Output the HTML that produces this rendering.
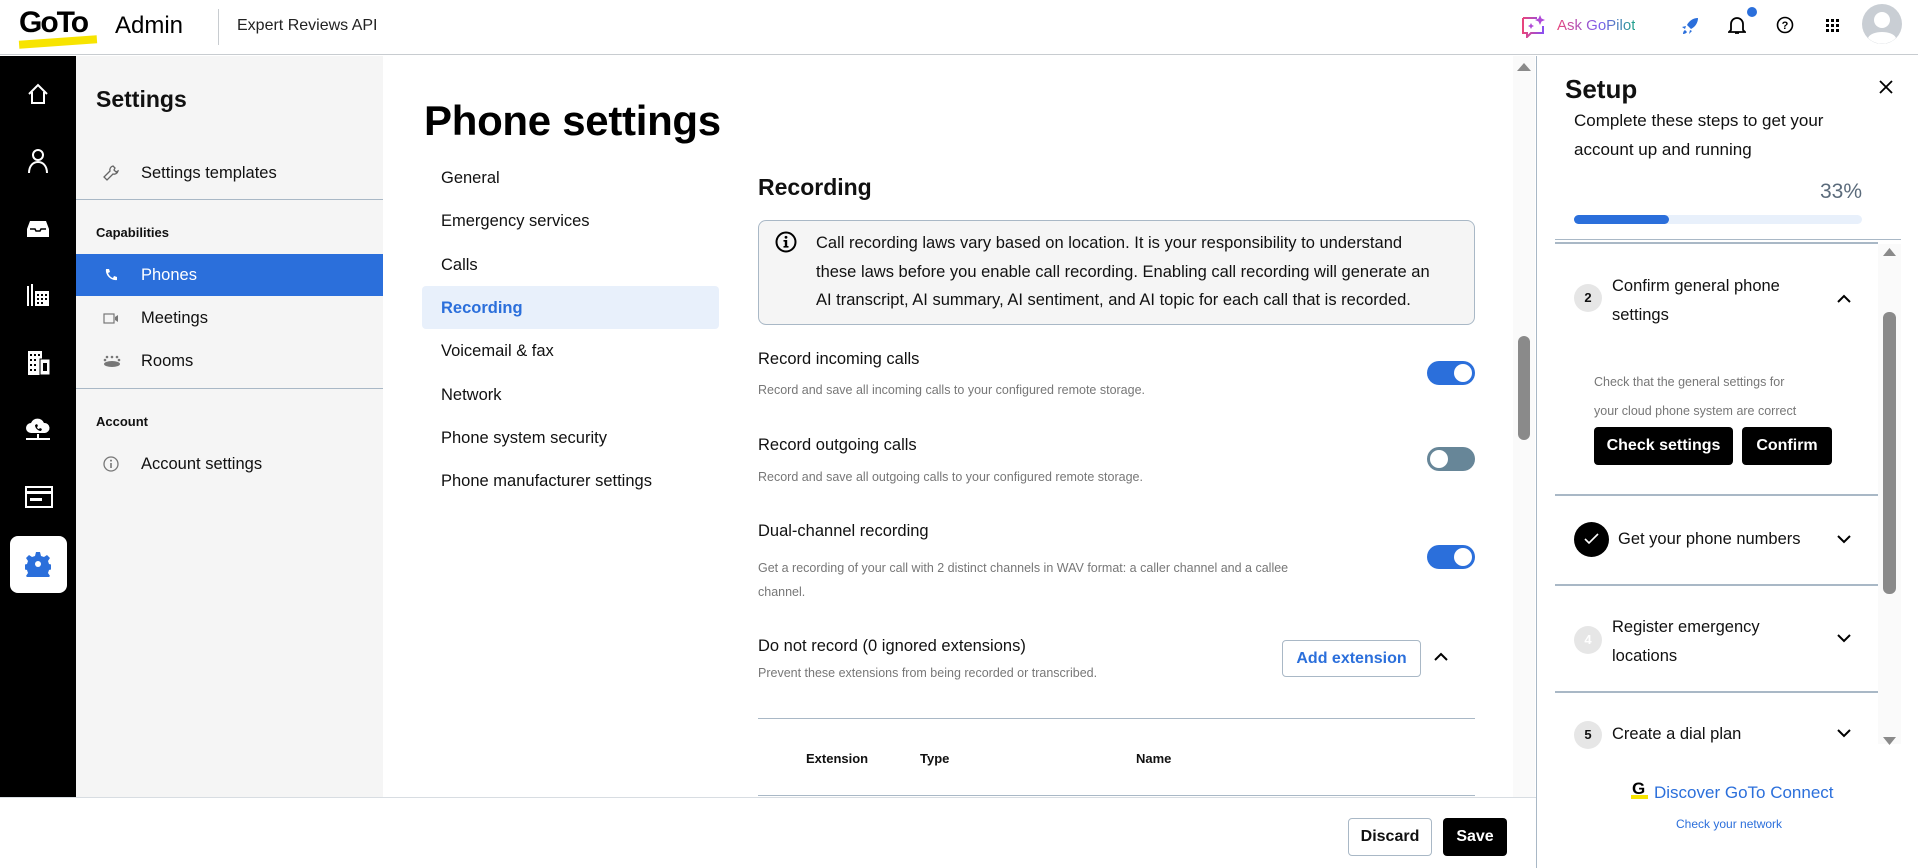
<!DOCTYPE html>
<html><head><meta charset="utf-8"><style>
*{box-sizing:border-box;margin:0;padding:0}
body{width:1918px;height:868px;overflow:hidden;font-family:"Liberation Sans",Arial,sans-serif;color:#111;background:#fff;position:relative}
.a{position:absolute;white-space:nowrap}
.hdr{left:0;top:0;width:1918px;height:55px;border-bottom:1px solid #c8ccd0;background:#fff}
.rail{left:0;top:56px;width:76px;height:742px;background:#000}
.side{left:76px;top:56px;width:307px;height:742px;background:#f5f5f5}
.t17{font-size:16.5px}
.sub{font-size:12.5px;color:#777}
.tog{width:48px;height:24px;border-radius:12px;background:#2b6fdb}
.tog::after{content:"";position:absolute;top:3px;left:27px;width:18px;height:18px;border-radius:50%;background:#fff}
.tog.off{background:#678698}
.tog.off::after{left:3px}
.hr{height:1px;background:#a9b8c6}
.btnb{background:#000;color:#fff;font-weight:bold;font-size:16px;border-radius:4px;text-align:center}
.circ{width:28px;height:28px;border-radius:50%;background:#e6e6e6;font-size:13px;font-weight:bold;text-align:center;line-height:28px}
</style></head><body>
<div class="a hdr"></div>
<div class="a" style="left:19px;top:6px;font-size:30px;font-weight:bold;letter-spacing:-2px;color:#000">GoTo</div>
<div class="a" style="left:19px;top:38px;width:78px;height:8px;background:#f7e400;transform:rotate(-4deg)"></div>
<div class="a" style="left:115px;top:12px;font-size:24px;color:#000">Admin</div>
<div class="a" style="left:218px;top:9px;width:1px;height:36px;background:#c8ccd0"></div>
<div class="a" style="left:237px;top:17px;font-size:16px;color:#222">Expert Reviews API</div>
<svg class="a" style="left:1521px;top:14px" width="26" height="24" viewBox="0 0 26 24"><defs><linearGradient id="g" x1="0" x2="1"><stop offset="0" stop-color="#e8457c"/><stop offset="1" stop-color="#8a4ff0"/></linearGradient></defs><path d="M2 4h14M2 4v15h4v4l4-4h12v-7" fill="none" stroke="url(#g)" stroke-width="2"/><path d="M19 1l1.5 3.5 3.5 1.5-3.5 1.5L19 11l-1.5-3.5L14 6l3.5-1.5z M10 9l1 2 2 1-2 1-1 2-1-2-2-1 2-1z" fill="#b04ad8"/></svg>
<div class="a" style="left:1557px;top:17px;font-size:15px;background:linear-gradient(90deg,#e8457c,#7b5cf0 55%,#1fa38a);-webkit-background-clip:text;color:transparent">Ask GoPilot</div>
<svg class="a" style="left:1680px;top:16px" width="20" height="20" viewBox="0 0 20 20"><path d="M18 2c-5 0-9 3-11 7l4 4c4-2 7-6 7-11zM6 10l-4 1 3 2zM10 14l-1 4 3-3zM5 14c-2 1-2 4-2 4s3 0 4-2z" fill="#2b6fdb"/></svg>
<svg class="a" style="left:1728px;top:15px" width="18" height="20" viewBox="0 0 18 20"><path d="M3 15V9a6 6 0 0 1 12 0v6l2 2H1zM7 18h4" fill="none" stroke="#000" stroke-width="1.8"/></svg>
<div class="a" style="left:1747px;top:7px;width:10px;height:10px;border-radius:50%;background:#2b6fdb"></div>
<svg class="a" style="left:1776px;top:16px" width="18" height="18" viewBox="0 0 18 18"><circle cx="9" cy="9" r="7.5" fill="none" stroke="#000" stroke-width="1.6"/><text x="9" y="13" font-size="11" text-anchor="middle" font-weight="bold" font-family="Liberation Sans">?</text></svg>
<svg class="a" style="left:1826px;top:19px" width="13" height="13" viewBox="0 0 13 13" fill="#000"><rect x="0" y="0" width="3" height="3"/><rect x="5" y="0" width="3" height="3"/><rect x="10" y="0" width="3" height="3"/><rect x="0" y="5" width="3" height="3"/><rect x="5" y="5" width="3" height="3"/><rect x="10" y="5" width="3" height="3"/><rect x="0" y="10" width="3" height="3"/><rect x="5" y="10" width="3" height="3"/><rect x="10" y="10" width="3" height="3"/></svg>
<svg class="a" style="left:1862px;top:4px" width="40" height="40" viewBox="0 0 40 40"><circle cx="20" cy="20" r="20" fill="#c9ced4"/><circle cx="20" cy="16" r="8" fill="#fff"/><path d="M6 34c3-8 25-8 28 0a20 20 0 0 1-28 0z" fill="#fff"/></svg>

<div class="a rail"></div>
<svg class="a" style="left:26px;top:82px" width="24" height="24" viewBox="0 0 24 24"><path d="M3 12L12 3l9 9M6 10v11h12V10" fill="none" stroke="#fff" stroke-width="2"/></svg>
<svg class="a" style="left:27px;top:148px" width="22" height="26" viewBox="0 0 22 26"><circle cx="11" cy="7" r="5" fill="none" stroke="#fff" stroke-width="2"/><path d="M2 25c0-7 4-11 9-11s9 4 9 11" fill="none" stroke="#fff" stroke-width="2"/></svg>
<svg class="a" style="left:26px;top:219px" width="24" height="20" viewBox="0 0 24 20"><path d="M4 2h16l3 8v8H1v-8z" fill="#fff"/><path d="M4 10h5l1 2h4l1-2h5" fill="none" stroke="#000" stroke-width="1.5"/></svg>
<svg class="a" style="left:26px;top:283px" width="24" height="24" viewBox="0 0 24 24" fill="#fff"><rect x="1" y="3" width="2" height="20"/><rect x="5" y="1" width="2" height="22"/><path d="M9 8h14v15H9z"/><g fill="#000"><rect x="11" y="11" width="2" height="2"/><rect x="15" y="11" width="2" height="2"/><rect x="19" y="11" width="2" height="2"/><rect x="11" y="15" width="2" height="2"/><rect x="15" y="15" width="2" height="2"/><rect x="19" y="15" width="2" height="2"/><rect x="11" y="19" width="2" height="2"/><rect x="15" y="19" width="2" height="2"/></g></svg>
<svg class="a" style="left:27px;top:350px" width="24" height="26" viewBox="0 0 24 26"><rect x="1" y="1" width="14" height="24" fill="#fff"/><rect x="13" y="9" width="10" height="16" fill="#fff" stroke="#000"/><g fill="#000"><rect x="3" y="4" width="2" height="2"/><rect x="7" y="4" width="2" height="2"/><rect x="11" y="4" width="2" height="2"/><rect x="3" y="9" width="2" height="2"/><rect x="7" y="9" width="2" height="2"/><rect x="3" y="14" width="2" height="2"/><rect x="7" y="14" width="2" height="2"/><rect x="3" y="19" width="2" height="2"/><rect x="7" y="19" width="2" height="2"/><rect x="16" y="13" width="4" height="8"/></g></svg>
<svg class="a" style="left:25px;top:416px" width="26" height="26" viewBox="0 0 26 26"><path d="M6 17a5 5 0 0 1 0-10 7 7 0 0 1 13 0 5 5 0 0 1 1 10z" fill="#fff"/><path d="M10 9c0 3 3 6 6 6l1-2-2-1-1 1c-1 0-2-1-2-2l1-1-1-2z" fill="#000"/><path d="M1 23h24M13 18v5" stroke="#fff" stroke-width="2"/></svg>
<svg class="a" style="left:25px;top:486px" width="28" height="22" viewBox="0 0 28 22"><rect x="1" y="1" width="26" height="20" fill="none" stroke="#fff" stroke-width="2"/><rect x="1" y="5" width="26" height="3" fill="#fff"/><rect x="5" y="12" width="12" height="3" fill="#fff"/></svg>
<div class="a" style="left:10px;top:536px;width:57px;height:57px;border-radius:8px;background:#fff"></div>
<svg class="a" style="left:25px;top:551px" width="26" height="26" viewBox="0 0 26 26"><path d="M11 1h4l1 4 3 1 3-2 3 3-2 3 1 3 4 1v4l-4 1-1 3 2 3-3 3-3-2-3 1-1 4h-4l-1-4-3-1-3 2-3-3 2-3-1-3-4-1v-4l4-1 1-3-2-3 3-3 3 2 3-1z" fill="#2b6fdb"/><circle cx="13" cy="13" r="3" fill="#fff"/></svg>

<div class="a side"></div>
<div class="a" style="left:96px;top:86px;font-size:23px;font-weight:bold;color:#111">Settings</div>
<svg class="a" style="left:103px;top:165px" width="16" height="16" viewBox="0 0 16 16"><path d="M10 1a4 4 0 0 0-3 5L1 12l3 3 6-6a4 4 0 0 0 5-3l-2 1-2-2 1-2z" fill="none" stroke="#666" stroke-width="1.3"/></svg>
<div class="a t17" style="left:141px;top:164px">Settings templates</div>
<div class="a" style="left:76px;top:199px;width:307px;height:1px;background:#a9b8c6"></div>
<div class="a" style="left:96px;top:225px;font-size:13px;font-weight:bold">Capabilities</div>
<div class="a" style="left:76px;top:254px;width:307px;height:42px;background:#2b6fdb"></div>
<svg class="a" style="left:104px;top:268px" width="14" height="14" viewBox="0 0 14 14"><path d="M2 1l3 0 1 3-2 1c1 2 2 4 5 5l1-2 3 1v3c-6 1-12-5-11-11z" fill="#fff"/></svg>
<div class="a t17" style="left:141px;top:266px;color:#fff">Phones</div>
<svg class="a" style="left:103px;top:313px" width="16" height="11" viewBox="0 0 16 11"><rect x="1" y="1" width="10" height="9" fill="none" stroke="#777" stroke-width="1.2"/><path d="M12 4l3-2v7l-3-2z" fill="#777"/></svg>
<div class="a t17" style="left:141px;top:309px">Meetings</div>
<svg class="a" style="left:103px;top:355px" width="18" height="12" viewBox="0 0 18 12" fill="#777"><circle cx="4" cy="2" r="1.3"/><circle cx="9" cy="2" r="1.3"/><circle cx="14" cy="2" r="1.3"/><circle cx="2" cy="5" r="1.3"/><circle cx="16" cy="5" r="1.3"/><ellipse cx="9" cy="9" rx="8" ry="3"/></svg>
<div class="a t17" style="left:141px;top:352px">Rooms</div>
<div class="a" style="left:76px;top:388px;width:307px;height:1px;background:#a9b8c6"></div>
<div class="a" style="left:96px;top:414px;font-size:13px;font-weight:bold">Account</div>
<svg class="a" style="left:103px;top:456px" width="16" height="16" viewBox="0 0 16 16"><circle cx="8" cy="8" r="7" fill="none" stroke="#777" stroke-width="1.3"/><rect x="7.2" y="7" width="1.6" height="5" fill="#777"/><circle cx="8" cy="4.6" r="1" fill="#777"/></svg>
<div class="a t17" style="left:141px;top:455px">Account settings</div>

<div class="a" style="left:424px;top:97px;font-size:42px;font-weight:bold;color:#000;letter-spacing:-0.3px">Phone settings</div>
<div class="a" style="left:422px;top:286px;width:297px;height:43px;background:#e8f0fb;border-radius:4px"></div>
<div class="a t17" style="left:441px;top:169px">General</div>
<div class="a t17" style="left:441px;top:212px">Emergency services</div>
<div class="a t17" style="left:441px;top:256px">Calls</div>
<div class="a t17" style="left:441px;top:299px;color:#2b6fdb;font-weight:bold">Recording</div>
<div class="a t17" style="left:441px;top:342px">Voicemail &amp; fax</div>
<div class="a t17" style="left:441px;top:386px">Network</div>
<div class="a t17" style="left:441px;top:429px">Phone system security</div>
<div class="a t17" style="left:441px;top:472px">Phone manufacturer settings</div>

<div class="a" style="left:758px;top:174px;font-size:23px;font-weight:bold">Recording</div>
<div class="a" style="left:758px;top:220px;width:717px;height:105px;background:#f5f5f5;border:1px solid #a9b8c6;border-radius:8px"></div>
<svg class="a" style="left:775px;top:231px" width="22" height="22" viewBox="0 0 22 22"><circle cx="11" cy="11" r="9.5" fill="none" stroke="#000" stroke-width="2"/><rect x="9.8" y="9" width="2.4" height="7" fill="#000"/><rect x="8.5" y="15" width="5" height="1.6" fill="#000"/><rect x="8.5" y="9" width="3" height="1.6" fill="#000"/><circle cx="11" cy="6.3" r="1.4" fill="#000"/></svg>
<div class="a" style="left:816px;top:229px;font-size:16.5px;line-height:28.5px;white-space:normal;width:625px">Call recording laws vary based on location. It is your responsibility to understand these laws before you enable call recording. Enabling call recording will generate an AI transcript, AI summary, AI sentiment, and AI topic for each call that is recorded.</div>

<div class="a t17" style="left:758px;top:350px">Record incoming calls</div>
<div class="a sub" style="left:758px;top:383px">Record and save all incoming calls to your configured remote storage.</div>
<div class="a tog" style="left:1427px;top:361px"></div>
<div class="a t17" style="left:758px;top:436px">Record outgoing calls</div>
<div class="a sub" style="left:758px;top:470px">Record and save all outgoing calls to your configured remote storage.</div>
<div class="a tog off" style="left:1427px;top:447px"></div>
<div class="a t17" style="left:758px;top:522px">Dual-channel recording</div>
<div class="a sub" style="left:758px;top:556px;line-height:24px;white-space:normal;width:560px">Get a recording of your call with 2 distinct channels in WAV format: a caller channel and a callee channel.</div>
<div class="a tog" style="left:1427px;top:545px"></div>
<div class="a t17" style="left:758px;top:637px">Do not record (0 ignored extensions)</div>
<div class="a sub" style="left:758px;top:666px">Prevent these extensions from being recorded or transcribed.</div>
<div class="a" style="left:1282px;top:640px;width:139px;height:37px;border:1px solid #a9b8c6;border-radius:4px;color:#2b6fdb;font-size:16px;font-weight:bold;text-align:center;line-height:35px">Add extension</div>
<svg class="a" style="left:1434px;top:652px" width="14" height="9" viewBox="0 0 14 9"><path d="M1 8l6-6 6 6" fill="none" stroke="#000" stroke-width="2"/></svg>
<div class="a hr" style="left:758px;top:718px;width:717px"></div>
<div class="a" style="left:806px;top:751px;font-size:13px;font-weight:bold">Extension</div>
<div class="a" style="left:920px;top:751px;font-size:13px;font-weight:bold">Type</div>
<div class="a" style="left:1136px;top:751px;font-size:13px;font-weight:bold">Name</div>
<div class="a hr" style="left:758px;top:795px;width:717px"></div>

<div class="a" style="left:1513px;top:56px;width:22px;height:742px;background:#fafafa"></div>
<svg class="a" style="left:1517px;top:62px" width="14" height="9"><path d="M0 9L7 1l7 8z" fill="#8a8a8a"/></svg>
<div class="a" style="left:1518px;top:336px;width:12px;height:104px;border-radius:6px;background:#8a8a8a"></div>

<div class="a" style="left:0;top:797px;width:1537px;height:71px;background:#fff;border-top:1px solid #d8dde2"></div>
<div class="a" style="left:1348px;top:818px;width:84px;height:38px;border:1px solid #a9b8c6;border-radius:4px;font-size:16px;font-weight:bold;text-align:center;line-height:36px">Discard</div>
<div class="a btnb" style="left:1443px;top:818px;width:64px;height:38px;line-height:38px">Save</div>

<div class="a" style="left:1536px;top:56px;width:1px;height:812px;background:#a9b8c6"></div>
<div class="a" style="left:1565px;top:74px;font-size:26px;font-weight:bold">Setup</div>
<svg class="a" style="left:1879px;top:80px" width="14" height="14" viewBox="0 0 14 14"><path d="M1 1l12 12M13 1L1 13" stroke="#000" stroke-width="1.8"/></svg>
<div class="a" style="left:1574px;top:106px;font-size:17px;line-height:29px">Complete these steps to get your<br>account up and running</div>
<div class="a" style="left:1800px;top:180px;width:62px;text-align:right;font-size:21px;color:#5b6b7b">33%</div>
<div class="a" style="left:1574px;top:215px;width:288px;height:9px;border-radius:5px;background:#e8f0fb"></div>
<div class="a" style="left:1574px;top:215px;width:95px;height:9px;border-radius:5px;background:#2b6fdb"></div>
<div class="a hr" style="left:1555px;top:239px;width:346px"></div>
<div class="a" style="left:1555px;top:242px;width:323px;height:2px;background:#a9b8c6"></div>
<div class="a" style="left:1878px;top:244px;width:23px;height:500px;background:#fafafa"></div>
<svg class="a" style="left:1883px;top:247px" width="13" height="9"><path d="M0 9L6.5 1 13 9z" fill="#8a8a8a"/></svg>
<div class="a" style="left:1883px;top:312px;width:13px;height:282px;border-radius:6px;background:#8a8a8a"></div>
<svg class="a" style="left:1883px;top:737px" width="13" height="9"><path d="M0 0h13L6.5 8z" fill="#8a8a8a"/></svg>

<div class="a circ" style="left:1574px;top:284px">2</div>
<div class="a" style="left:1612px;top:272px;font-size:16.5px;line-height:29px">Confirm general phone<br>settings</div>
<svg class="a" style="left:1837px;top:294px" width="14" height="9" viewBox="0 0 14 9"><path d="M1 8l6-6 6 6" fill="none" stroke="#000" stroke-width="2"/></svg>
<div class="a" style="left:1594px;top:368px;font-size:12.5px;color:#777;line-height:29px">Check that the general settings for<br>your cloud phone system are correct</div>
<div class="a btnb" style="left:1594px;top:427px;width:139px;height:38px;line-height:38px">Check settings</div>
<div class="a btnb" style="left:1742px;top:427px;width:90px;height:38px;line-height:38px">Confirm</div>
<div class="a" style="left:1555px;top:494px;width:323px;height:2px;background:#a9b8c6"></div>

<div class="a" style="left:1574px;top:522px;width:35px;height:35px;border-radius:50%;background:#000"></div>
<svg class="a" style="left:1584px;top:533px" width="15" height="12" viewBox="0 0 15 12"><path d="M1 6l4 4 9-9" fill="none" stroke="#fff" stroke-width="1.6"/></svg>
<div class="a t17" style="left:1618px;top:530px">Get your phone numbers</div>
<svg class="a" style="left:1837px;top:535px" width="14" height="9" viewBox="0 0 14 9"><path d="M1 1l6 6 6-6" fill="none" stroke="#000" stroke-width="2"/></svg>
<div class="a" style="left:1555px;top:584px;width:323px;height:2px;background:#a9b8c6"></div>

<div class="a circ" style="left:1574px;top:626px;color:#fff">4</div>
<div class="a" style="left:1612px;top:613px;font-size:16.5px;line-height:29px">Register emergency<br>locations</div>
<svg class="a" style="left:1837px;top:634px" width="14" height="9" viewBox="0 0 14 9"><path d="M1 1l6 6 6-6" fill="none" stroke="#000" stroke-width="2"/></svg>
<div class="a" style="left:1555px;top:691px;width:323px;height:2px;background:#a9b8c6"></div>

<div class="a circ" style="left:1574px;top:721px">5</div>
<div class="a t17" style="left:1612px;top:725px">Create a dial plan</div>
<svg class="a" style="left:1837px;top:729px" width="14" height="9" viewBox="0 0 14 9"><path d="M1 1l6 6 6-6" fill="none" stroke="#000" stroke-width="2"/></svg>

<div class="a" style="left:1632px;top:779px;font-size:17px;font-weight:bold;color:#000">G</div>
<div class="a" style="left:1631px;top:795px;width:17px;height:4px;background:#f7e400"></div>
<div class="a" style="left:1654px;top:783px;font-size:17px;color:#2b6fdb">Discover GoTo Connect</div>
<div class="a" style="left:1676px;top:817px;font-size:12px;color:#2b6fdb">Check your network</div>
</body></html>
